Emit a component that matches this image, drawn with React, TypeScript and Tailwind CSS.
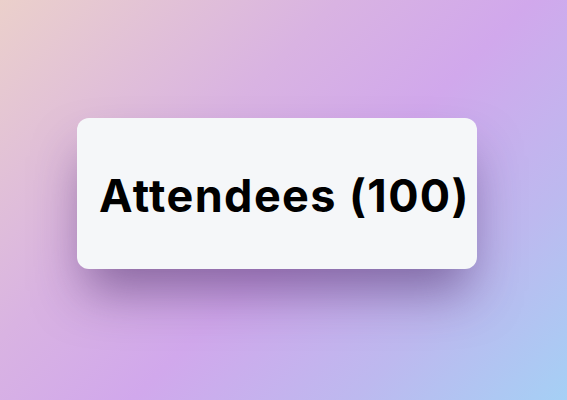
export default function App() {
  return (
    <div className="flex h-screen w-full items-center justify-center bg-[linear-gradient(135deg,#ebd0cb_0%,#d9b3e2_35%,#d1a8ec_55%,#bdb9ef_78%,#a5d0f5_100%)] pb-[13px] pr-[13px]">
      <div className="flex h-[151px] w-[400px] items-center rounded-xl bg-[#f5f7f9] pl-[22px] pt-[3px] shadow-[0_30px_50px_-8px_rgba(60,30,90,0.5)]">
        <h2 className="whitespace-nowrap font-['Inter',sans-serif] text-[45px] font-bold leading-none tracking-[1.4px] text-black">
          Attendees (100)
        </h2>
      </div>
    </div>
  );
}
